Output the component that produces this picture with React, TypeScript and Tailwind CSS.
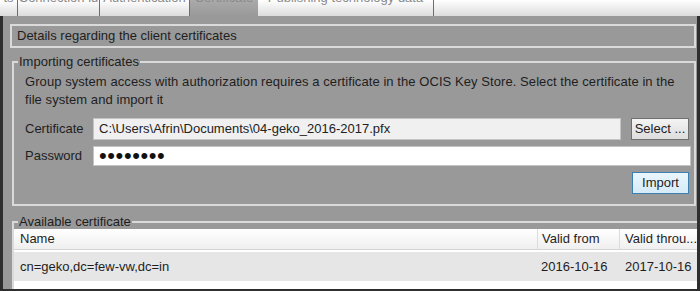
import React from 'react';

const tabs = [
    { label: 'ts', w: 'w-[18px]', active: false },
    { label: 'Connection id', w: 'w-[82px]', active: false },
    { label: 'Authentication', w: 'w-[90px]', active: false },
    { label: 'Certificate', w: 'w-[68px]', active: true },
    { label: 'Publishing technology data', w: 'w-[176px]', active: false },
];

export default function App() {
    return (
        <div className="w-[700px] h-[291px] flex flex-col overflow-hidden font-['Liberation_Sans',Arial,sans-serif] text-[13px] text-[#1e1e1e]">
            {/* tab strip, text cut off at the top */}
            <div className="h-[16px] shrink-0 flex bg-gradient-to-b from-white to-[#dcdcdc]">
                {tabs.map((t) => (
                    <div
                        key={t.label}
                        className={`${t.w} shrink-0 overflow-hidden border-r border-[#6e6e6e] flex justify-center ${
                            t.active ? 'bg-gradient-to-b from-[#aaaaaa] to-[#999999] border-r-0' : ''
                        }`}
                    >
                        <span className="-mt-[10px] leading-[16px] whitespace-nowrap text-[#8a8a8a]">{t.label}</span>
                    </div>
                ))}
                <div className="flex-1" />
            </div>

            <div className="flex-1 min-h-0 overflow-hidden bg-[#999999] border-l-[3px] border-r-[3px] border-b-2 border-[#2e2e2e] pt-[8px] pl-[7px] pr-[1px]">
                <div className="h-[24px] border-2 border-[#dadada] flex items-center pl-[5px]">
                    Details regarding the client certificates
                </div>

                <fieldset className="mt-[6px] ml-[2px] border-2 border-[#dadada] pb-[10px]">
                    <legend className="ml-[4px] px-[1px] leading-[15px]">Importing certificates</legend>
                    <div className="pl-[11px] pr-[3px] pt-[4px]">
                        <p className="leading-[18px] whitespace-nowrap tracking-[0.07px]">
                            Group system access with authorization requires a certificate in the OCIS Key Store. Select the certificate in the
                            <br />
                            file system and import it
                        </p>
                        <div className="mt-[9px] flex items-center">
                            <span className="w-[68px] shrink-0">Certificate</span>
                            <div className="flex-1 h-[22px] bg-[#f0f0f0] border border-[#c4c4c4] flex items-center pl-[5px] text-[#222]">
                                C:\Users\Afrin\Documents\04-geko_2016-2017.pfx
                            </div>
                            <button className="ml-[10px] mr-[2px] w-[58px] h-[22px] border border-[#707070] bg-gradient-to-b from-[#f4f4f4] to-[#dddddd] text-[#222]">
                                Select ...
                            </button>
                        </div>
                        <div className="mt-[6px] flex items-center">
                            <span className="w-[68px] shrink-0">Password</span>
                            <div className="flex-1 h-[20px] bg-white border border-[#c4c4c4] flex items-center pl-[5px] overflow-hidden">
                                <span className="text-[22px] leading-[20px] tracking-[0.6px] text-[#111]">••••••••</span>
                            </div>
                        </div>
                        <div className="mt-[6px] flex justify-end">
                            <button className="mr-[2px] w-[57px] h-[22px] border border-[#3c7fb1] bg-gradient-to-b from-[#eaf6fd] to-[#d5ebf8] text-[#222]">
                                Import
                            </button>
                        </div>
                    </div>
                </fieldset>

                <fieldset className="mt-[8px] ml-[2px] border-2 border-[#dadada] h-[120px]">
                    <legend className="ml-[4px] px-[1px] leading-[15px]">Available certificate</legend>
                    <div className="bg-white h-full">
                        <div className="h-[21px] flex items-center bg-gradient-to-b from-white to-[#efefef] border-b border-[#d4d4d4]">
                            <div className="w-[523px] pl-[6px]">Name</div>
                            <div className="w-[82px] h-full flex items-center pl-[4px] border-l border-[#dcdcdc]">Valid from</div>
                            <div className="flex-1 h-full flex items-center pl-[5px] border-l border-[#dcdcdc] whitespace-nowrap">Valid throu...</div>
                        </div>
                        <div className="mt-[2px] h-[29px] flex items-center bg-[#e6e6e6]">
                            <div className="w-[523px] pl-[6px]">cn=geko,dc=few-vw,dc=in</div>
                            <div className="w-[82px] pl-[4px]">2016-10-16</div>
                            <div className="flex-1 pl-[6px]">2017-10-16</div>
                        </div>
                    </div>
                </fieldset>
            </div>
        </div>
    );
}
